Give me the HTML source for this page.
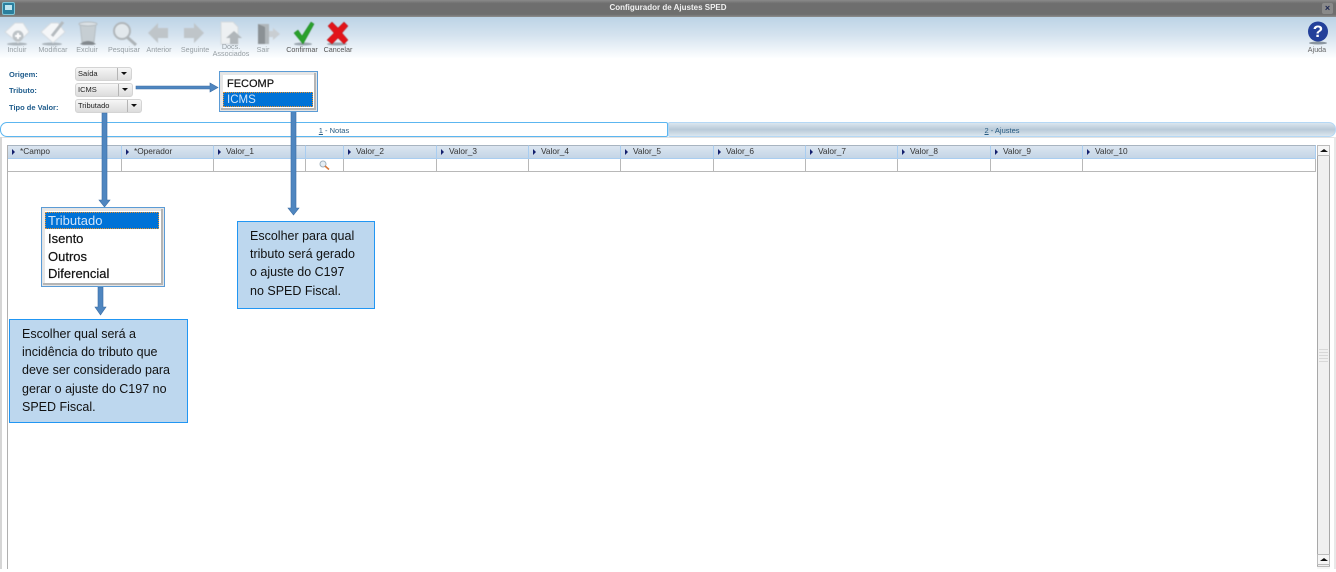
<!DOCTYPE html>
<html><head><meta charset="utf-8"><style>
html,body{margin:0;padding:0;background:#fff}
#p{position:relative;width:1336px;height:572px;overflow:hidden;background:#fff;font-family:"Liberation Sans",sans-serif}
#p div{position:absolute;box-sizing:border-box;white-space:nowrap}
.tl{font-size:7.2px;color:#969ea3;text-align:center;width:60px;top:45.500px;line-height:8px}
.lb{font-size:7.5px;font-weight:bold;color:#1f5c8c;left:9px}
.sel{background:linear-gradient(#f6f6f6,#dcdcdc);border:1px solid #d4d4d4;border-radius:3px;font-size:7.5px;color:#222;padding-left:2px;height:14px;line-height:12px}
.sel i{position:absolute;right:0;top:0;width:13px;height:12px;border-left:1px solid #b5b5b5}
.sel i:after{content:"";position:absolute;left:3px;top:4px;border:3px solid transparent;border-top:3px solid #111;border-bottom:0}
.h{top:145px;height:14px;background:linear-gradient(#dbe5f0,#c4d5e6);border-right:1px solid #a9cdf0;border-top:1px solid #a8b4c0;border-bottom:1px solid #a9cdf0;font-size:8.300px;color:#333;line-height:11px;padding-left:12px}
.h:before{content:"";position:absolute;left:4px;top:3px;border:3px solid transparent;border-left:3px solid #14206e;border-right:0}
.h.n:before{display:none}
.c{top:159px;height:13px;border-right:1px solid #b8b8b8;border-bottom:1px solid #b8b8b8}
.box{background:#bdd7ee;border:1px solid #2196f3;color:#111;font-size:12.500px;line-height:18.200px}
.dd{background:#fff;border:1px solid #5b9bd5;box-shadow:inset 0 0 0 1px #e4e4e4,inset -3px -3px 0 0 #b5b5b5,inset 3px 3px 0 0 #e6e6e6}
.it{color:#111;line-height:17px;-webkit-text-stroke:.2px #111}
.s{background:#0072d6;color:#cfe4fa;-webkit-text-stroke:0;outline:1px dotted #e8912c;outline-offset:-1px}
</style></head><body><div id="p">
<div style="left:0;top:0;width:1336px;height:17px;background:linear-gradient(#8a8a8a,#6e6e6e 20%,#6e6e6e 85%,#8d8d8d)"></div>
<div style="left:2px;top:2px;width:13px;height:13px;background:#2a7f9e;border:1px solid #7fc4d6;border-radius:2px"></div>
<div style="left:5px;top:5px;width:7px;height:5px;background:#bfe4ef"></div>
<div style="left:0;top:3px;width:1336px;text-align:center;color:#f0f0f0;font-size:8px;font-weight:bold;line-height:10px">Configurador de Ajustes SPED</div>
<div style="left:1322px;top:3px;width:11px;height:11px;background:#8a8a8a;border-radius:2px;color:#1a2450;font-size:9px;font-weight:bold;text-align:center;line-height:10px">×</div>
<div style="left:0;top:17px;width:1336px;height:41px;background:linear-gradient(#bcd3e6,#d5e3ef 45%,#fdfeff)"></div>

<svg style="position:absolute;left:0;top:15px;filter:blur(.5px)" width="360" height="32" viewBox="0 15 360 32">
<g>
<ellipse cx="17" cy="44" rx="10" ry="1.500" fill="#aab3ba"/>
<path d="M5 32 L15 23 H23 L29 32 L18 43 Z" fill="#f4f6f8" stroke="#d5dbe0"/>
<circle cx="18" cy="36" r="5.500" fill="#bcc2c6"/><path d="M15 36h6M18 33v6" stroke="#fff" stroke-width="2"/>
<ellipse cx="52" cy="44" rx="10" ry="1.500" fill="#aab3ba"/>
<path d="M41 32 L51 23 H58 L65 32 L53 43 Z" fill="#f4f6f8" stroke="#d5dbe0"/>
<path d="M52 36 L63 22" stroke="#b4babe" stroke-width="3"/>
<path d="M80 23 h16 l-2 19 h-12 Z" fill="#c6ced3" stroke="#b5bdc2"/>
<ellipse cx="88" cy="24" rx="9" ry="2" fill="#dbe1e5" stroke="#b5bdc2"/>
<path d="M80 44 q8 -6 16 0 l-3 1 h-10z" fill="#83898e"/>
<circle cx="122" cy="31" r="8" fill="#e2e8ec" stroke="#b1b7bb" stroke-width="2"/>
<path d="M127 37 L136 45" stroke="#adb3b7" stroke-width="3"/>
<path d="M148 33 L158 23 V28 H168 V38 H158 V43 Z" fill="#bfc5c9"/>
<path d="M204 33 L194 23 V28 H184 V38 H194 V43 Z" fill="#bfc5c9"/>
<path d="M221 22 H233 L238 27 V44 H221 Z" fill="#edf0f2" stroke="#d5dade"/>
<path d="M234 31 L242 38 H238 V44 H230 V38 H226 Z" fill="#b0b6ba"/>
<rect x="258" y="24" width="11" height="20" fill="#b0b6ba"/><path d="M258 24 L265 27 V44 H258Z" fill="#8b9195"/>
<path d="M269 31 H273 V28 L280 34 L273 40 V37 H269 Z" fill="#c9ced2"/>
<ellipse cx="303" cy="44" rx="9" ry="1.500" fill="#98a3ac"/>
<path d="M294 33 L298 30 L302 36 L311 22 L314 24 L303 44 Z" fill="#2aa02c" stroke="#0c7a12" stroke-width=".5"/>
<ellipse cx="337" cy="44" rx="10" ry="1.500" fill="#98a3ac"/>
<path d="M328 26 L332 22 L338 28 L344 22 L348 26 L342 33 L348 40 L344 44 L338 38 L332 44 L327 40 L334 33 Z" fill="#e2141a" stroke="#a80e12" stroke-width=".5"/>
</g></svg>
<div class="tl" style="left:-13px">Incluir</div>
<div class="tl" style="left:23px">Modificar</div>
<div class="tl" style="left:57px">Excluir</div>
<div class="tl" style="left:94px">Pesquisar</div>
<div class="tl" style="left:129px">Anterior</div>
<div class="tl" style="left:165px">Seguinte</div>
<div class="tl" style="left:201px;top:44px;line-height:6.500px">Docs.<br>Associados</div>
<div class="tl" style="left:233px">Sair</div>
<div class="tl" style="left:272px;color:#555">Confirmar</div>
<div class="tl" style="left:308px;color:#555">Cancelar</div>
<svg style="position:absolute;left:1306px;top:20px;filter:blur(.3px)" width="24" height="26"><ellipse cx="12" cy="23" rx="9" ry="1.500" fill="#8a96a0"/><circle cx="12" cy="11.500" r="10" fill="#23409a"/><text x="12" y="17" font-family="Liberation Sans" font-size="17" font-weight="bold" text-anchor="middle" fill="#fff">?</text></svg>
<div class="tl" style="left:1287px;color:#666">Ajuda</div>

<div class="lb" style="top:70px">Origem:</div>
<div class="lb" style="top:86px">Tributo:</div>
<div class="lb" style="top:103px">Tipo de Valor:</div>
<div class="sel" style="left:75px;top:67px;width:57px">Saída<i></i></div>
<div class="sel" style="left:75px;top:83px;width:58px">ICMS<i></i></div>
<div class="sel" style="left:75px;top:99px;width:67px">Tributado<i></i></div>

<div style="left:0;top:122px;width:668px;height:15px;background:#fff;border:1px solid #5cb6f0;border-radius:7px 2px 2px 7px"></div>
<div style="left:668px;top:122px;width:668px;height:15px;background:linear-gradient(#dbe6ef,#b9cad8 50%,#dbe6ef);border:1px solid #b5d8f5;border-radius:2px 7px 7px 2px"></div>
<div style="left:0;top:126px;width:668px;text-align:center;font-size:7.500px;color:#275a80;line-height:10px"><u>1</u> - Notas</div>
<div style="left:668px;top:126px;width:668px;text-align:center;font-size:7.500px;color:#275a80;line-height:10px"><u>2</u> - Ajustes</div>

<div style="left:0;top:137px;width:1336px;height:1px;background:#e2e2e2"></div>
<div style="left:0;top:137px;width:2px;height:432px;background:#d6d6d6"></div>
<div style="left:1334px;top:137px;width:2px;height:432px;background:#e8e8e8"></div>
<div style="left:7px;top:145px;width:1px;height:424px;background:#b0b0b0"></div>

<div class="h" style="left:8px;width:114px">*Campo</div>
<div class="h" style="left:122px;width:92px">*Operador</div>
<div class="h" style="left:214px;width:92px">Valor_1</div>
<div class="h n" style="left:306px;width:38px;padding:0"></div>
<div class="h" style="left:344px;width:93px">Valor_2</div>
<div class="h" style="left:437px;width:92px">Valor_3</div>
<div class="h" style="left:529px;width:92px">Valor_4</div>
<div class="h" style="left:621px;width:93px">Valor_5</div>
<div class="h" style="left:714px;width:92px">Valor_6</div>
<div class="h" style="left:806px;width:92px">Valor_7</div>
<div class="h" style="left:898px;width:93px">Valor_8</div>
<div class="h" style="left:991px;width:92px">Valor_9</div>
<div class="h" style="left:1083px;width:233px">Valor_10</div>

<div class="c" style="left:8px;width:114px"></div>
<div class="c" style="left:122px;width:92px"></div>
<div class="c" style="left:214px;width:92px"></div>
<div class="c" style="left:306px;width:38px"></div>
<div class="c" style="left:344px;width:93px"></div>
<div class="c" style="left:437px;width:92px"></div>
<div class="c" style="left:529px;width:92px"></div>
<div class="c" style="left:621px;width:93px"></div>
<div class="c" style="left:714px;width:92px"></div>
<div class="c" style="left:806px;width:92px"></div>
<div class="c" style="left:898px;width:93px"></div>
<div class="c" style="left:991px;width:92px"></div>
<div class="c" style="left:1083px;width:233px"></div>
<svg style="position:absolute;left:319px;top:160px" width="11" height="10"><circle cx="4" cy="4" r="3" fill="#e6eef4" stroke="#9fb0bd"/><path d="M6 6 L10 9.500" stroke="#d9783a" stroke-width="1.600"/></svg>

<div style="left:1317px;top:145px;width:13px;height:424px;background:#f0f0f0;border-left:1px solid #a8a8a8;border-right:1px solid #a8a8a8"></div>
<div style="left:1317px;top:145px;width:13px;height:11px;background:#f6f6f6;border:1px solid #bbb"></div>
<div style="left:1320px;top:149px;border:4px solid transparent;border-bottom:3px solid #111;border-top:0"></div>
<div style="left:1317px;top:554px;width:13px;height:11px;background:#f6f6f6;border:1px solid #bbb"></div>
<div style="left:1320px;top:558px;border:4px solid transparent;border-bottom:3px solid #111;border-top:0"></div>
<div style="left:1317px;top:566px;width:13px;height:3px;background:#f6f6f6;border-top:1px solid #bbb"></div>
<div style="left:1319px;top:349px;width:9px;height:13px;background:repeating-linear-gradient(#d8d8d8 0 1px,transparent 1px 3px)"></div>

<svg style="position:absolute;left:0;top:0" width="400" height="340">
<g fill="#4f86c0" stroke="#3a6ca3" stroke-width=".6">
<path d="M136 86 H210 V83 L218 87.500 L210 92 V89 H136 Z"/>
<path d="M102 113 H107 V200 H110 L104.500 207 L99 200 H102 Z"/>
<path d="M291 111 H296 V208 H299 L293.500 215 L288 208 H291 Z"/>
<path d="M98 287 H103 V307 H106 L100.500 315 L95 307 H98 Z"/>
</g></svg>

<div class="dd" style="left:219px;top:71px;width:99px;height:41px"></div>
<div class="it" style="left:223px;top:76px;width:90px;height:16px;padding-left:4px;line-height:16px;font-size:11px">FECOMP</div>
<div class="it s" style="left:223px;top:92px;width:90px;height:15px;padding-left:4px;line-height:17px;font-size:11.500px">ICMS</div>

<div class="dd" style="left:41px;top:207px;width:124px;height:80px"></div>
<div class="it s" style="left:45px;top:212px;width:114px;height:17px;padding-left:3px;font-size:13px;line-height:18px">Tributado</div>
<div class="it" style="left:48px;top:230px;font-size:13px">Isento</div>
<div class="it" style="left:48px;top:248px;font-size:13px">Outros</div>
<div class="it" style="left:48px;top:265px;font-size:13px">Diferencial</div>

<div class="box" style="left:237px;top:221px;width:138px;height:88px;padding:5px 0 0 12px">Escolher para qual<br>tributo será gerado<br>o ajuste do C197<br>no SPED Fiscal.</div>
<div class="box" style="left:9px;top:319px;width:179px;height:104px;padding:5px 0 0 12px">Escolher qual será a<br>incidência do tributo que<br>deve ser considerado para<br>gerar o ajuste do C197 no<br>SPED Fiscal.</div>
</div></body></html>
